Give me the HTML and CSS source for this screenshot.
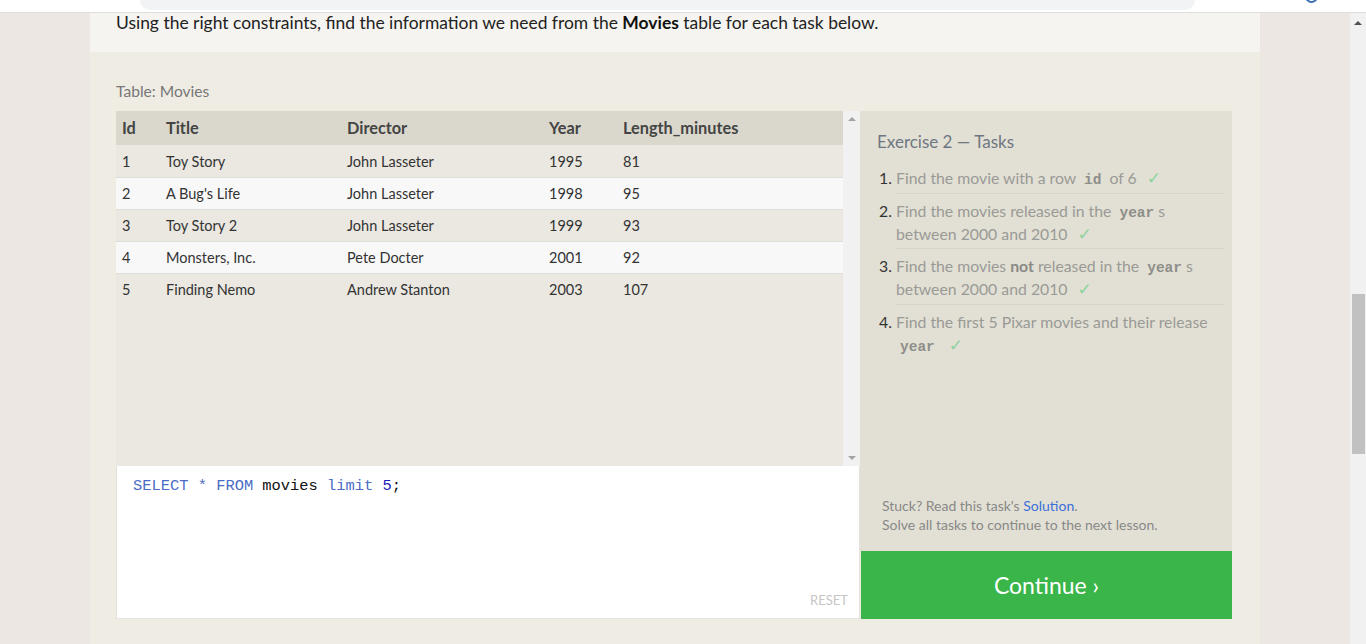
FILE: index.html
```html
<!DOCTYPE html>
<html>
<head>
<meta charset="utf-8">
<link rel="stylesheet" href="styles.css">
</head>
<body>
<div class="chrome">
  <div class="omnibox"></div>
  <div class="globe"></div>
</div>
<div class="viewport">
  <div class="gutter"></div>
  <main class="card">
    <section class="intro">
      <p>Using the right constraints, find the information we need from the <strong>Movies</strong> table for each task below.</p>
    </section>
    <section class="exercise">
      <div class="table-label">Table: Movies</div>
      <div class="workspace">
        <div class="left">
          <div class="table-area">
            <div class="table-scroll">
              <table class="results">
                <thead>
                  <tr><th class="c-id">Id</th><th class="c-title">Title</th><th class="c-dir">Director</th><th class="c-year">Year</th><th>Length_minutes</th></tr>
                </thead>
                <tbody>
                  <tr><td>1</td><td>Toy Story</td><td>John Lasseter</td><td>1995</td><td>81</td></tr>
                  <tr><td>2</td><td>A Bug's Life</td><td>John Lasseter</td><td>1998</td><td>95</td></tr>
                  <tr><td>3</td><td>Toy Story 2</td><td>John Lasseter</td><td>1999</td><td>93</td></tr>
                  <tr><td>4</td><td>Monsters, Inc.</td><td>Pete Docter</td><td>2001</td><td>92</td></tr>
                  <tr><td>5</td><td>Finding Nemo</td><td>Andrew Stanton</td><td>2003</td><td>107</td></tr>
                </tbody>
              </table>
            </div>
            <div class="vscroll">
              <span class="tri tri-up"></span>
              <span class="tri tri-down"></span>
            </div>
          </div>
          <div class="editor">
            <pre class="code"><span class="kw">SELECT</span> <span class="kw">*</span> <span class="kw">FROM</span> movies <span class="kw">limit</span> <span class="num">5</span>;</pre>
            <span class="reset">RESET</span>
          </div>
        </div>
        <div class="right">
          <div class="tasks">
            <h3 class="tasks-title">Exercise 2 — Tasks</h3>
            <ol class="task-list">
              <li>Find the movie with a row <code>id</code> of 6 <span class="check">✓</span></li>
              <li>Find the movies released in the <code>year</code>s between 2000 and 2010 <span class="check">✓</span></li>
              <li>Find the movies <strong>not</strong> released in the <code>year</code>s between 2000 and 2010 <span class="check">✓</span></li>
              <li>Find the first 5 Pixar movies and their release <code>year</code> <span class="check">✓</span></li>
            </ol>
            <div class="help">
              <p>Stuck? Read this task's <a class="link">Solution</a>.</p>
              <p>Solve all tasks to continue to the next lesson.</p>
            </div>
          </div>
          <div class="continue">Continue ›</div>
        </div>
      </div>
    </section>
  </main>
  <div class="gutter"></div>
  <div class="page-scroll">
    <span class="ps-up"></span>
    <span class="ps-thumb"></span>
  </div>
</div>
</body>
</html>
```

FILE: styles.css
```css
* { box-sizing: border-box; }
html, body { margin: 0; padding: 0; }
body {
  width: 1366px;
  height: 644px;
  overflow: hidden;
  background: #ece7e3;
  font-family: "Lato", "Open Sans", sans-serif;
  color: #333;
}
.chrome {
  height: 13px;
  background: #fff;
  border-bottom: 1px solid #dedede;
  position: relative;
}
.omnibox {
  position: absolute;
  left: 140px;
  top: 0;
  width: 1055px;
  height: 10px;
  background: #f1f3f4;
  border-radius: 0 0 12px 12px;
}
.globe {
  position: absolute;
  left: 1305px;
  top: -10px;
  width: 13px;
  height: 13px;
  border-radius: 50%;
  border: 2px solid #3a6fb8;
}
.viewport {
  display: flex;
  height: 631px;
}
.gutter { width: 90px; flex: none; }
.card {
  width: 1170px;
  flex: none;
  background: #efece4;
  display: flex;
  flex-direction: column;
}
.intro {
  height: 39px;
  background: #f5f4f0;
  padding: 0 26px;
}
.intro p {
  margin: 0;
  font-size: 17.45px;
  line-height: 20px;
  color: #222;
}
.intro strong { color: #111; }
.exercise {
  padding: 0 28px 0 26px;
}
.table-label {
  font-size: 15.6px;
  color: #777;
  line-height: 20px;
  padding-top: 29px;
  height: 59px;
}
.workspace {
  display: flex;
  height: 508px;
}
.left {
  width: 744px;
  flex: none;
  display: flex;
  flex-direction: column;
}
.table-area {
  height: 355px;
  display: flex;
  background: #eae8e1;
}
.table-scroll {
  flex: 1;
}
.results {
  width: 727px;
  border-collapse: collapse;
  font-size: 14.5px;
  table-layout: fixed;
}
.results th {
  height: 34px;
  background: #dad8cc;
  text-align: left;
  font-weight: 700;
  font-size: 16.3px;
  color: #444;
  padding: 0 6px 1px;
}
.results td {
  height: 32px;
  padding: 1px 6px 0;
  color: #333;
  border-bottom: 1px solid #dcdcd8;
}
.results tbody tr:last-child td { border-bottom: none; }
.results tbody tr:nth-child(odd) td { background: #eae8e1; }
.results tbody tr:nth-child(even) td { background: #f8f8f8; }
.c-id { width: 44px; }
.c-title { width: 181px; }
.c-dir { width: 202px; }
.c-year { width: 74px; }
.vscroll {
  width: 17px;
  flex: none;
  background: #f1f1f1;
  display: flex;
  flex-direction: column;
  justify-content: space-between;
  align-items: center;
  padding: 6px 0;
}
.tri {
  width: 0;
  height: 0;
  border-left: 4px solid transparent;
  border-right: 4px solid transparent;
}
.tri-up { border-bottom: 4px solid #a3a3a3; }
.tri-down { border-top: 4px solid #a3a3a3; }
.editor {
  position: relative;
  flex: 1;
  background: #fff;
  border: 1px solid #e4e2da;
  border-top: none;
  padding: 10px 16px;
}
.code {
  margin: 0;
  font-family: "Liberation Mono", monospace;
  font-size: 15.4px;
  line-height: 20px;
  color: #111;
}
.kw { color: #4a6cc4; }
.num { color: #1c1cb8; }
.reset {
  position: absolute;
  right: 11px;
  bottom: 10px;
  font-size: 13px;
  color: #c6c6c6;
}
.right {
  width: 372px;
  flex: none;
  display: flex;
  flex-direction: column;
}
.tasks {
  flex: 1;
  background: #e2e0d4;
  padding: 20px 8px 0 17px;
  display: flex;
  flex-direction: column;
}
.tasks-title {
  margin: 0;
  font-size: 17px;
  font-weight: 400;
  line-height: 22px;
  color: #6f7782;
}
.task-list {
  margin: 8px 0 0;
  padding: 0 0 0 19px;
  font-size: 15.8px;
  color: #9a9a96;
}
.task-list li {
  line-height: 23px;
  padding: 5px 0 3.5px;
  border-bottom: 1px solid #d6d4c8;
}
.task-list li:last-child { border-bottom: none; }
.task-list li::marker { color: #333; }
.task-list code {
  font-family: "Liberation Mono", monospace;
  font-weight: 700;
  font-size: 14.5px;
  line-height: 1;
  color: #8e8e8a;
  padding: 0 4px;
}
.task-list strong { color: #8a8a86; }
.check {
  color: #8fd3a0;
  font-family: "DejaVu Sans", sans-serif;
  font-size: 17px;
  line-height: 1;
  margin-left: 6px;
}
.help {
  margin-top: auto;
  padding: 0 0 17px 5px;
  font-size: 14px;
  line-height: 19px;
  color: #888;
}
.help p { margin: 0; }
.link { color: #3b6fd9; }
.continue {
  height: 68px;
  background: #3ab54a;
  color: #fff;
  font-size: 23px;
  display: flex;
  align-items: center;
  justify-content: center;
  margin-left: 1px;
}
.page-scroll {
  width: 16px;
  flex: none;
  background: #f1f1f1;
  display: flex;
  flex-direction: column;
  align-items: center;
  padding-top: 8px;
}
.ps-up {
  width: 0;
  height: 0;
  border-left: 4px solid transparent;
  border-right: 4px solid transparent;
  border-bottom: 4px solid #505050;
}
.ps-thumb {
  margin-top: 269px;
  width: 13px;
  height: 160px;
  background: #c1c1c1;
}
```
